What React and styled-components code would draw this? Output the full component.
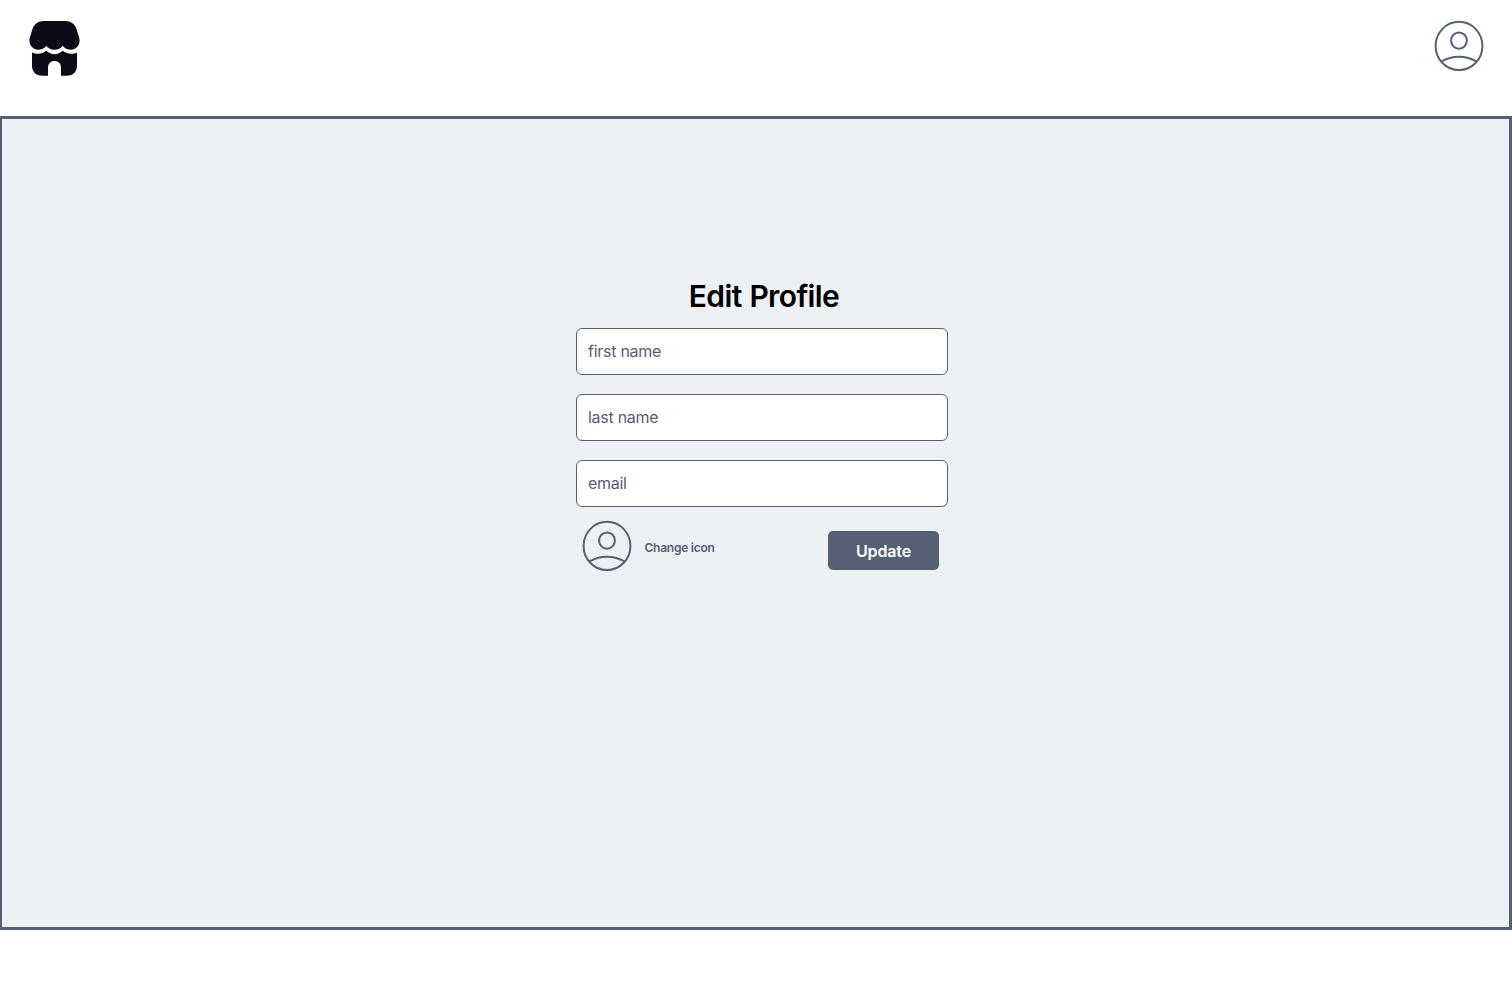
import React from "react";
import styled, { createGlobalStyle } from "styled-components";

const slate = "#556074";

const GlobalStyle = createGlobalStyle`
  *, *::before, *::after { box-sizing: border-box; }
  body {
    margin: 0;
    background: #fff;
    font-family: Inter, "Liberation Sans", sans-serif;
  }
`;

const Page = styled.div`
  display: flex;
  flex-direction: column;
  height: 982px;
  overflow: hidden;
`;

const Header = styled.header`
  display: flex;
  justify-content: space-between;
  align-items: flex-start;
  height: 116px;
  padding: 20px 28px 0 29px;
`;

const Icon = styled.svg`
  display: block;
  flex: none;
`;

const Main = styled.main`
  display: flex;
  flex-direction: column;
  align-items: center;
  height: 814px;
  padding: 156px 0 0 13px;
  border: 3px solid ${slate};
  border-left-width: 2px;
  background: #edf1f4;
`;

const Form = styled.form`
  display: flex;
  flex-direction: column;
  width: 372px;
`;

const Title = styled.h1`
  margin: 0 0 10px 4px;
  font-size: 30px;
  font-weight: 600;
  line-height: 43px;
  letter-spacing: -0.62px;
  word-spacing: 0.8px;
  text-align: center;
  color: #000;
`;

const Fields = styled.div`
  display: flex;
  flex-direction: column;
  gap: 19px;
`;

const Field = styled.input`
  width: 100%;
  height: 47px;
  padding: 0 11px 2px;
  border: 1px solid ${slate};
  border-radius: 6px;
  background: #fff;
  font: 400 16px/24px Inter, "Liberation Sans", sans-serif;
  letter-spacing: -0.27px;
  color: ${slate};
  outline: none;

  &::placeholder { color: ${slate}; opacity: 1; }
`;

const Actions = styled.div`
  display: flex;
  justify-content: space-between;
  align-items: flex-start;
  padding: 13px 9px 0 6px;
`;

const IconPicker = styled.div`
  display: flex;
  align-items: center;
  gap: 12.5px;
  font-size: 12px;
  font-weight: 600;
  letter-spacing: -0.24px;
  color: ${slate};
`;

const IconLabel = styled.span`
  padding-top: 2px;
`;

const UpdateButton = styled.button`
  width: 111px;
  height: 39px;
  margin-top: 11px;
  padding: 0;
  border: 0;
  border-radius: 5px;
  background: ${slate};
  color: #fff;
  font: 600 16px/24px Inter, "Liberation Sans", sans-serif;
  letter-spacing: -0.15px;
`;

const StoreLogo = () => (
  <Icon width="52" height="57" viewBox="0 0 52 57" fill="#0b0b18">
    <path d="M15 1H36C42 1 46 4 47.500 9L50 17C52.300 24 47.500 29.700 42 29.700C38.500 29.700 35.500 28.200 33.700 25.700C31.800 28.300 29 29.700 25.500 29.700C22 29.700 19.200 28.300 17.300 25.700C15.500 28.200 12.500 29.700 9 29.700C3.500 29.700 -1.200 24 1 17L3.500 9C5 4 9 1 15 1Z" />
    <path d="M3 32.400C8 34.900 13.500 33.900 17.300 30.800C22 35.300 29 35.300 33.700 30.800C37.500 33.900 43 34.900 48 32.400V46C48 51.500 44 55.800 38 55.800H32V47.500C32 43.700 29.300 41 25.500 41C21.700 41 19 43.700 19 47.500V55.800H13C7 55.800 3 51.500 3 46Z" />
  </Icon>
);

const Avatar = () => (
  <Icon width="50" height="52" viewBox="0 0 50 52" fill="none" stroke={slate} strokeWidth="2">
    <ellipse cx="25" cy="25.900" rx="23.400" ry="24.100" />
    <ellipse cx="25" cy="20.600" rx="7.900" ry="8.200" />
    <path d="M7.300 41.500C18 35 32 35 42.700 41.500" />
  </Icon>
);

export default function App() {
  return (
    <Page>
      <GlobalStyle />
      <Header>
        <StoreLogo />
        <Avatar />
      </Header>
      <Main>
        <Form onSubmit={(event) => event.preventDefault()}>
          <Title>Edit Profile</Title>
          <Fields>
            <Field placeholder="first name" aria-label="first name" />
            <Field placeholder="last name" aria-label="last name" />
            <Field type="email" placeholder="email" aria-label="email" />
          </Fields>
          <Actions>
            <IconPicker>
              <Avatar />
              <IconLabel>Change icon</IconLabel>
            </IconPicker>
            <UpdateButton type="submit">Update</UpdateButton>
          </Actions>
        </Form>
      </Main>
    </Page>
  );
}
